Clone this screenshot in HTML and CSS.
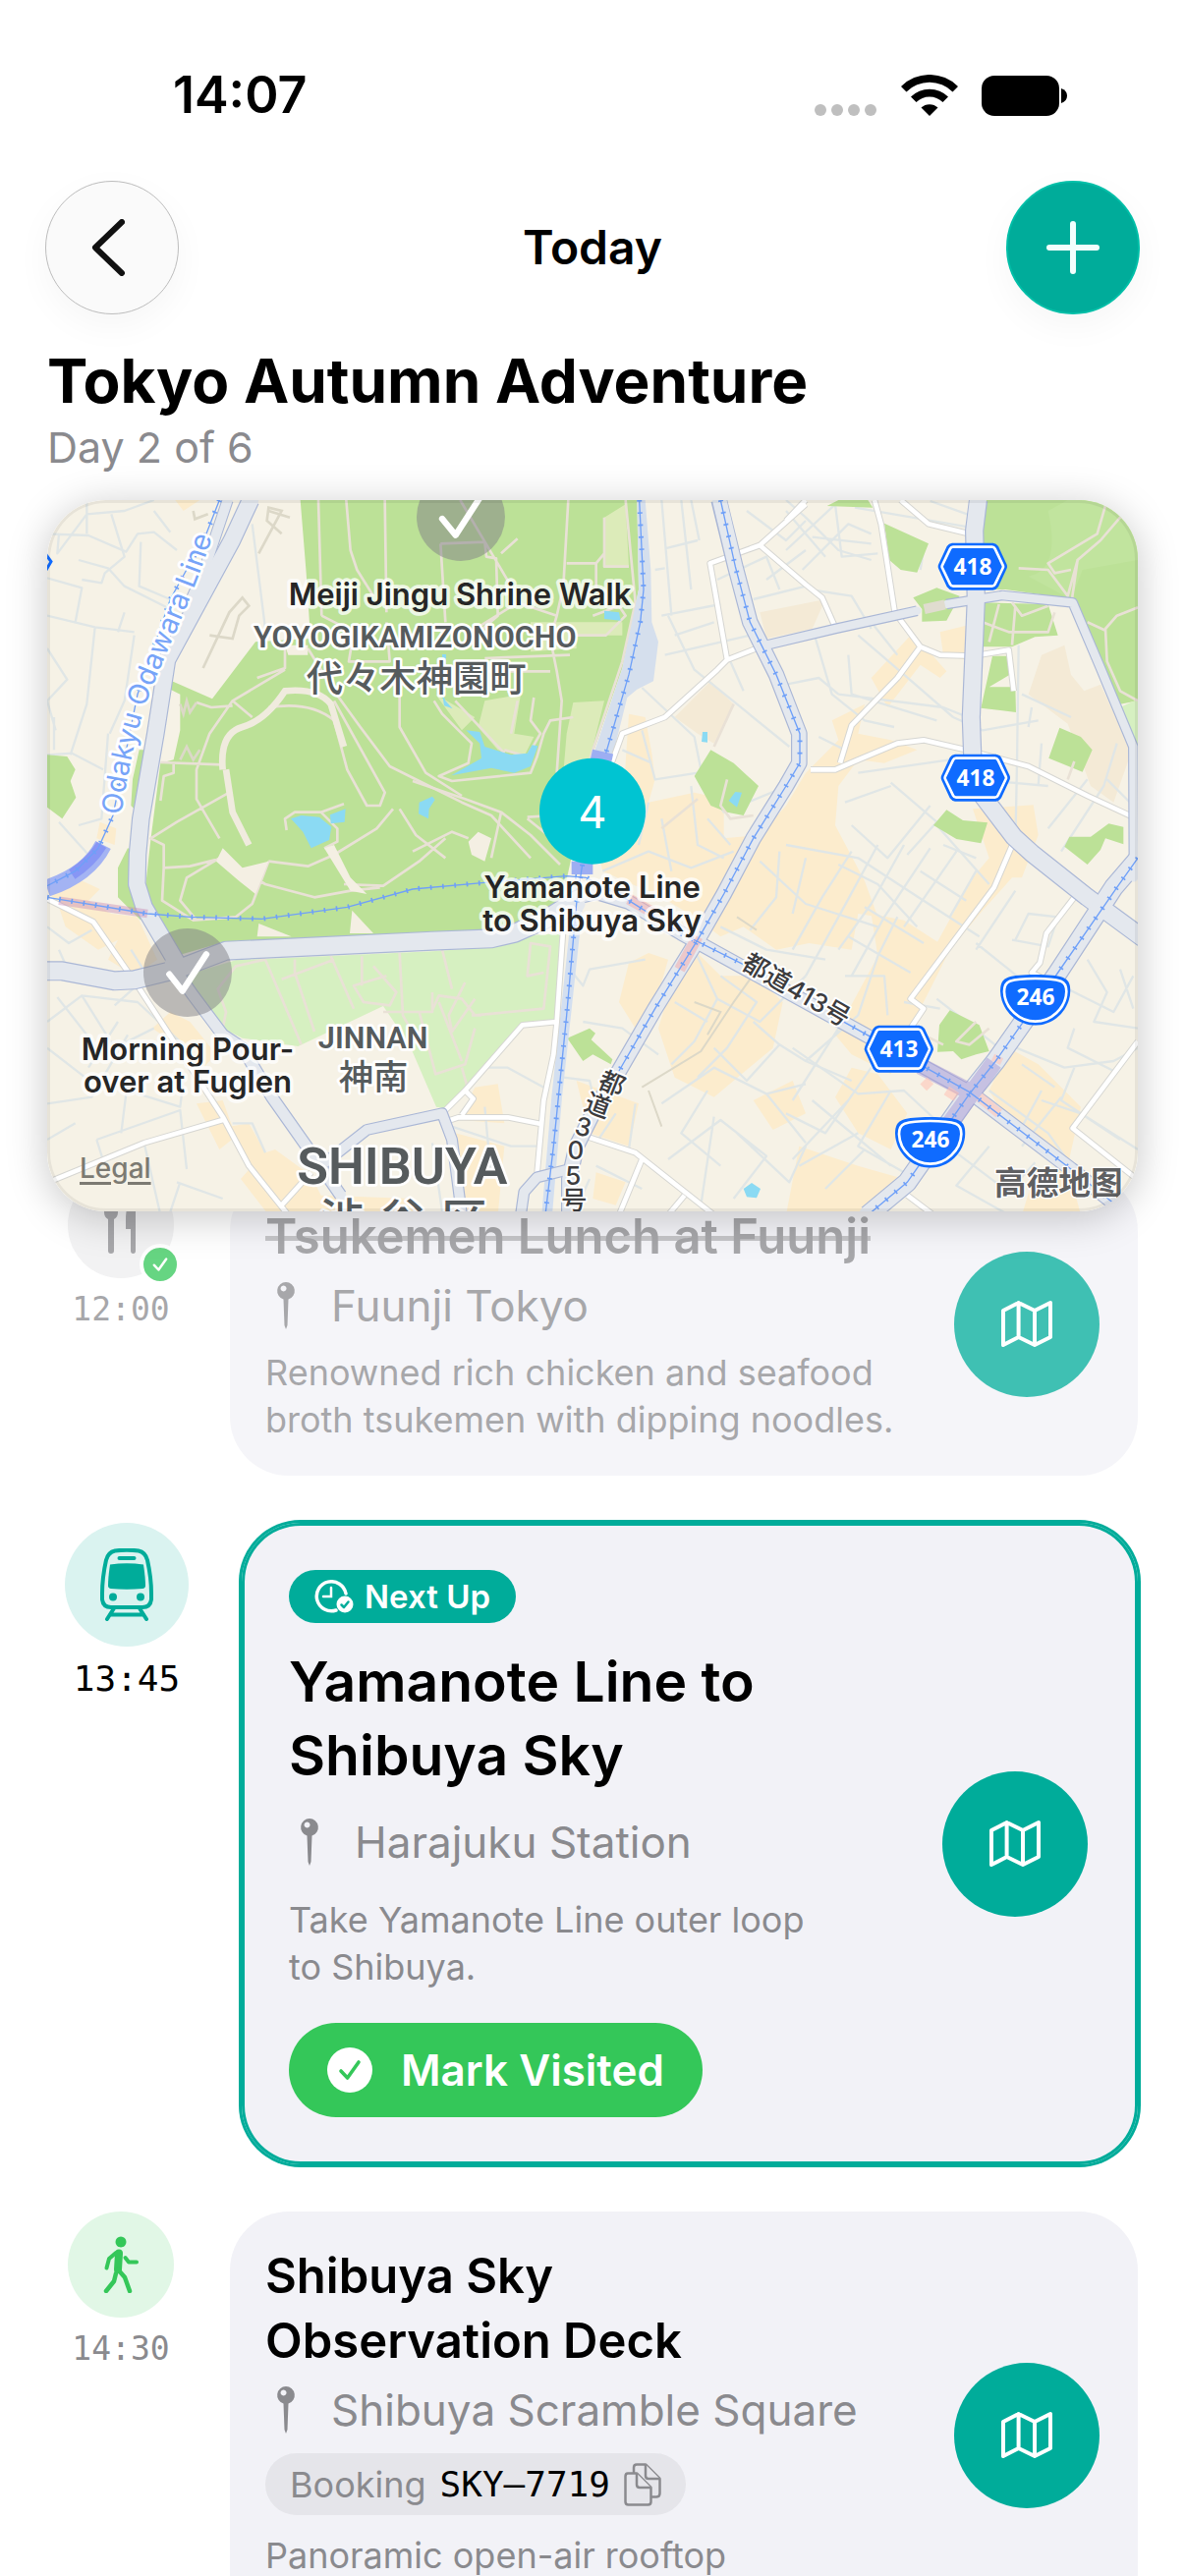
FILE: index.html
```
<!DOCTYPE html>
<html lang="en">
<head>
<meta charset="utf-8">
<meta name="viewport" content="width=device-width, initial-scale=1">
<title>Today</title>
<link rel="stylesheet" href="styles.css">
</head>
<body>
<svg class="sprite" aria-hidden="true">
  <symbol id="i-map" viewBox="0 0 52 49"><path d="M2 11 17.600 3 34 11 50 3V38L34 46 17.600 38 2 46ZM17.600 3V38M34 11V46" fill="none" stroke="currentColor" stroke-width="4" stroke-linejoin="round" stroke-linecap="round"/></symbol>
  <symbol id="i-pin" viewBox="0 0 18 48"><path fill="currentColor" fill-rule="evenodd" d="M9 0a9 9 0 0 1 2.500 17.600L10.500 44 9 48 7.500 44 6.500 17.600A9 9 0 0 1 9 0ZM6.500 3.500a3 3 0 1 0 .1 0Z"/></symbol>
  <symbol id="i-check" viewBox="0 0 16 16"><path d="M3.500 8.500 6.800 12 12.500 4" fill="none" stroke="currentColor" stroke-width="1.800" stroke-linecap="round" stroke-linejoin="round"/></symbol>
  <symbol id="hex" viewBox="0 0 215 148"><path d="M45 2H170Q180 3 186 12L211 66Q215 74 211 82L186 136Q180 145 170 146H45Q35 145 29 136L4 82Q0 74 4 66L29 12Q35 3 45 2Z" fill="#0f6bff"/><path d="M48 14H167Q173 14 176 20L200 70Q202 74 200 78L176 128Q173 134 167 134H48Q42 134 39 128L15 78Q13 74 15 70L39 20Q42 14 48 14Z" fill="none" stroke="#fff" stroke-width="8"/></symbol>
  <symbol id="round" viewBox="0 0 215 155"><path d="M107 0C150 0 172 3 190 8 208 14 214 28 214 50 212 110 162 155 107 155S2 110 0 50C0 28 6 14 24 8 42 3 64 0 107 0Z" fill="#0f6bff"/><path d="M107 12C150 12 170 15 185 20 198 25 202 34 202 52 200 104 154 143 107 143S14 104 12 52C12 34 16 25 29 20 44 15 64 12 107 12Z" fill="none" stroke="#fff" stroke-width="8"/></symbol>
</svg>

<div class="app">
  <div class="status">
    <span class="status-time">14:07</span>
    <span class="status-icons">
      <svg class="dots" viewBox="0 0 64 12"><g fill="#bfbfbf"><circle cx="6" cy="6" r="6"/><circle cx="23" cy="6" r="6"/><circle cx="40" cy="6" r="6"/><circle cx="57" cy="6" r="6"/></g></svg>
      <svg class="wifi" viewBox="0 0 58 42"><path d="M29 42 20.500 33.500A12.500 12.500 0 0 1 37.500 33.500Z"/><path d="M10 22.500 15.500 28A19.500 19.500 0 0 1 42.500 28L48 22.500A27 27 0 0 0 10 22.500Z"/><path d="M0 12 5.500 17.500A33.500 33.500 0 0 1 52.500 17.500L58 12A41 41 0 0 0 0 12Z"/></svg>
      <svg class="battery" viewBox="0 0 87 41"><rect width="79" height="41" rx="13"/><path d="M81 13Q87 15 87 20.500T81 28Z"/></svg>
    </span>
  </div>

  <nav class="nav">
    <button class="nav-btn back" aria-label="Back"><svg viewBox="0 0 34 58"><path d="M31 3 4 29 31 55" fill="none" stroke="#111" stroke-width="6" stroke-linecap="round" stroke-linejoin="round"/></svg></button>
    <span class="nav-title">Today</span>
    <button class="nav-btn add" aria-label="Add"><svg viewBox="0 0 54 54"><path d="M27 3V51M3 27H51" stroke="#f2fffd" stroke-width="6" stroke-linecap="round"/></svg></button>
  </nav>

  <header class="heading">
    <h1>Tokyo Autumn Adventure</h1>
    <p>Day 2 of 6</p>
  </header>

  <section class="map">
    <svg class="map-canvas" viewBox="24 27 3330 2172" preserveAspectRatio="xMidYMid slice">
      <rect x="0" y="0" width="3400" height="2260" fill="#f6f2e6"/>
      <!-- built-up blocks -->
      <g fill="#fceccd">
        <path d="M415 27H490L440 60ZM185 1010 235 1030 230 1080 175 1060Z"/>
        <path d="M24 1215 110 1180 185 1215 150 1250 220 1290 300 1300 360 1430 290 1480 210 1430 240 1370 180 1400 80 1330 60 1270Z"/>
        <path d="M345 1640 400 1590 460 1620 540 1720 500 1760 420 1690ZM480 1870 560 1860 600 1970 550 2010ZM580 1940 640 1930 690 2020 720 2010 830 2090 860 2150 1140 2160V2210H700L615 2100 650 2060Z"/>
        <path d="M1800 680 1850 690 1870 800 1880 880 1860 950 2000 920 2090 940 2090 1060 2200 1050 2280 960 2340 860 2440 760 2420 700 2520 650 2500 740 2600 760 2680 790 2580 830 2500 820 2440 900 2430 1020 2520 1190 2560 1300 2500 1290 2480 1400 2350 1380 2250 1400 2150 1330 2080 1360 2000 1300 1900 1240 1720 1160 1700 1080 1780 980Z"/>
        <path d="M2540 570 2660 440 2700 470 2770 550 2750 570 2690 530 2590 660ZM2750 430 2830 410V515L2760 500ZM2850 970 3035 958 3050 1050 3000 1180 2970 1180 2880 1280 2780 1400 2740 1380 2850 1180 2900 1120Z"/>
        <path d="M1800 1440 1860 1410 1920 1430 1900 1500 1820 1640 1770 1560ZM1920 1540 2000 1400 2080 1480 2190 1480 2270 1560 2240 1700 2060 1850 1940 1790 1890 1640Z"/>
        <path d="M2540 1290 2640 1310 2780 1400 2680 1600 2600 1780 2480 1720 2430 1660 2560 1420ZM2480 1760 2560 1780 2650 1900 2600 2010 2500 1960 2430 1850ZM2960 1700 3050 1750 3180 1880 3140 2060 2940 1900 2900 1830ZM2320 2000 2500 2060 2640 2100 2560 2210H2280ZM3040 2080 3140 2060 3180 2210H3000Z"/>
        <path d="M1330 1820 1400 1810 1420 1930 1280 1920ZM1640 1800 1830 1870 1800 2000 1680 1960ZM1700 2080 1790 2110 1760 2180 1690 2160ZM2180 1860 2300 1800 2340 1900 2240 1950ZM1270 1960 1420 2000 1400 2210H1300Z"/>
      </g>
      <g fill="#f4ead6">
        <path d="M2200 370 2400 330 2360 420 2220 450ZM1940 690 2050 580 2120 650 2060 770 2010 740ZM3020 620 3060 500 3130 470 3150 560 3190 610 3240 590 3310 740 3340 780 3280 950 3210 900 3140 710Z"/>
      </g>
      <!-- minor streets -->
      <g fill="none" stroke="#e0e6e6" stroke-width="7" stroke-linejoin="round" class="streets">
        <path d="M145 27V130M24 130 150 135 265 185 300 130 350 125 420 180M24 60 90 27M60 130 55 190 145 70 260 60 350 27M120 210 210 235 260 290 400 360M24 265 130 295 110 400M24 380 170 415 290 430M170 415 145 650 95 805M24 480 85 575 24 640M260 370 240 430M220 70 260 200 200 250 190 280 130 270M310 155 305 290 400 330M350 60 400 125M24 805 100 800 195 850M210 740 190 1000 120 1020M290 440 260 640 215 740M45 690V790M650 100 690 420M60 1010 150 1110M24 640 50 730"/>
        <path d="M24 1620 130 1540 230 1700 350 1640M55 1545 200 1730M24 1870 160 1850 270 1660M130 1540 300 1560 450 1700M150 1760 240 1620M24 1700 140 1790 430 1880 440 1800M175 1980 430 1890 450 2070M175 1980 200 2060M24 1980 110 1930M320 1990 370 2210M420 2110 560 2160M230 1570 330 1480 280 1400M100 1490 60 1400M430 2110 400 2200M590 1930 650 1930 690 2020M270 1800 250 1960M700 1860 760 1930M24 1330 90 1380 160 1340"/>
        <path d="M1900 27 1930 380M1960 27 1990 300M2010 150 1910 175M1990 27 2015 150M1880 240 1910 235M1900 380 2080 345M2180 330 2340 290M1940 440 2060 400M1910 500 2170 440M1920 380 2000 545 2130 650 2290 780M2110 520 2150 610M1840 600 2000 750 2020 850M1840 730 1880 880 2010 860M1780 790 1870 830M2020 880 2090 980 2260 910M2070 270 2220 200 2260 300M2160 60 2280 150 2340 90M2340 180 2220 270M2280 27 2340 80 2440 180 2540 210"/>
        <path d="M2280 180 2430 40 2450 200 2560 190M2280 60 2400 200M2330 240 2470 100 2540 130M2360 140 2540 160M2350 300 2480 320 2540 420M2280 590 2380 570 2440 620M2370 450 2420 620 2520 700 2610 720M2470 500 2480 620 2740 700M2500 440 2640 560M2440 620 2760 660 2860 700M2640 560 2790 690M2540 400 2620 500M2380 750 2460 790M2790 690 2880 730 3050 700M2990 470 2985 830 2980 1080M3000 620 3150 690M3030 660 3020 720M3060 770 3050 900M2500 860 2780 820 2860 880M2600 890 2740 1010 2650 1110M2460 950 2600 900M2480 1020 2590 1120 2720 960M2860 880 3080 900M3290 770 3250 900 3120 1100M3200 880 3080 1030M2740 1020 2900 1200M3260 880 3340 960M2720 30 2860 80M2700 180 2690 240M2490 50 2840 110"/>
        <path d="M1720 1160 1860 1100 1990 1150 2120 1100M1860 950 1830 1080M1900 1000 1930 1160M1990 900 2010 1080 2090 1120M2040 1000 2110 1080M2200 1130 2340 1260 2560 1330M2260 1100 2250 1240 2170 1340M2340 1120 2300 1290M2080 1330 2220 1400 2400 1430M2480 1100 2390 1240 2300 1400M2440 1140 2560 1200 2680 1330M2280 1080 2500 1120 2700 1250 2870 1360M2560 1080 2440 1300 2340 1480M2640 1080 2540 1260 2440 1400M2720 1090 2580 1300 2480 1480M2520 1270 2700 1380M2470 1360 2660 1470M2800 1100 2640 1330M2760 1080 2860 1120M2690 1160 2830 1250"/>
        <path d="M1620 1460 1660 1510 1680 1460 1850 1430M1660 1620 1780 1640 1890 1720M1600 1790 1680 1800 1700 1880M2000 1400 2070 1550 2000 1680 1930 1750M2070 1550 2200 1620 2340 1480M2080 1480 2190 1560 2100 1700 2010 1790M1940 1560 2040 1620M2180 1620 2260 1690 2160 1800 2060 1700M2260 1690 2340 1740 2480 1800M1900 1870 2060 1760 2220 1840 2340 1810M2040 1830 1960 1960 2080 2060M1820 1870 1800 2010M1760 1900 1700 1990M1920 2040 2080 1920 2220 2030 2120 2160M2130 1960 2290 2110 2340 2000M2220 1840 2340 1990M2060 1910 2020 2180M1700 2060 1840 2130M1680 2100 1640 2190M1230 1930 1440 2000 1520 2000M1340 1760 1430 1760 1540 1820M1200 1990 1230 2200M1360 1880 1380 2100"/>
        <path d="M2340 1740 2500 1600 2560 1420 2620 1300M2460 1480 2580 1480 2590 1600M2740 1550 2830 1620 2930 1700M2860 1380 2960 1460 3080 1560M2640 1560 2750 1580M2970 1370 3080 1390 3110 1300 3020 1290 2980 1370M2300 1700 2500 1840 2640 1830 2780 1960M2440 1640 2300 1860M2540 1760 2400 1960 2280 1900M2600 1830 2500 2000 2640 2080M2300 2040 2470 1860M2320 2060 2500 1960M2400 2130 2520 2010M2360 1860 2600 2060M2900 1830 3080 1960 3180 2100M2960 1690 3130 1760 3280 1740 3354 1700M3000 1750 3100 1820M3060 1830 2990 1960M3160 1760 3120 1860 3300 1980M3000 2000 3120 1850M3060 1860 3180 1900 3354 2010M3100 1500 3280 1590 3340 1480M3200 1430 3260 1530 3220 1620 3354 1640M3160 1640 3140 1700 3280 1770M3300 1460 3340 1580M2900 2000 2800 2120 2960 2210M2800 2020 2960 2140 3040 2050M2860 1160 2780 1300M2980 1220 2860 1400"/>
      </g>
      <!-- parks -->
      <g fill="#bce197">
        <path d="M797 27 815 250 828 450 660 460 528 634 405 580 400 605 430 620V730L410 820 370 830 340 1065 325 1200 330 1270 415 1420 570 1375 1340 1345 1540 1310 1600 1230 1620 1140 1690 800 1780 540 1830 300 1825 27Z"/>
        <path d="M24 805 85 810 110 850 95 885 112 935 70 1000 24 965ZM305 790 285 880 280 960 300 980 330 790ZM270 1090 240 1150V1240L310 1310 300 1100Z"/>
        <path d="M2000 870 2050 790 2120 830 2196 900 2150 990 2100 980 2050 960ZM2580 98 2715 160 2680 248 2630 240 2595 210ZM2668 325 2740 295 2810 320 2770 395 2695 398 2695 360ZM2405 45 2440 27H2530L2545 50Z"/>
        <path d="M2890 27H3354V640L3300 650 3160 330 2950 300H2880L2875 150ZM2880 340 3080 345 3110 440 3040 445 2970 475H2880ZM2910 503H2965L2963 560 2900 598H2980L2982 675 2875 662Z"/>
        <path d="M3115 722 3180 750 3215 790 3185 857 3082 815ZM2770 973 2820 1005 2895 1012 2875 1075 2800 1062 2730 1020ZM3145 1055 3210 1055 3265 1015 3310 1025V1078L3255 1060 3240 1095 3200 1140 3130 1085Z"/>
        <path d="M1612 1670 1680 1640 1698 1655 1685 1675 1750 1735 1745 1750 1690 1720 1660 1740ZM2748 1630 2780 1585 2870 1630 2900 1710 2860 1720 2815 1735 2790 1710 2742 1712Z"/>
      </g>
      <path d="M3080 60Q3120 240 3020 260L3150 330 3185 240 3354 210V130L3260 27H3140Z" fill="#c1e49e"/>
      <g fill="#d6f0c1">
        <path d="M440 1480 600 1432 1200 1405 1390 1392 1510 1355 1600 1350 1580 1620 1470 1635 1240 1885 1212 1880 1130 1690 1050 1572 790 1695 620 1670 550 1635Z"/>
        <path d="M3300 660 3354 635V800Z"/>
      </g>
      <path d="M1725 80 1790 40 1800 230H1725ZM1630 645 1725 640 1680 820 1600 860 1610 740ZM1360 640 1470 620 1450 740 1510 750 1480 810 1400 790 1340 720ZM1210 620 1330 690 1290 730ZM1640 480 1500 490 1500 400H1780L1780 440H1640Z" fill="#dcebb9"/>
      <!-- park trails -->
      <g fill="none" stroke="#e9e1d6" stroke-width="8" stroke-linejoin="round">
        <path d="M852 27 862 380M937 27 950 180 970 240 1020 320M1055 27 1060 370M862 380 960 430 945 520 1070 520 1060 400M1100 620 1100 720 1180 860 1290 930M750 460 750 540 665 570M750 545 590 640 520 740 480 850 480 940 550 1060M820 480 900 610 980 720 1070 840 1290 950 1380 990 1500 1120M590 640 650 690M480 645 525 660 590 655M370 828 560 835M410 830V860L380 870 370 945M580 920 420 1010 340 1060 380 1080V1150L460 1145 560 1120M755 1035 750 1000 780 980H860L930 955M860 980 910 1030V1070L870 1090M1080 970 1030 1030 900 1110 820 1145 700 1130M1100 970 1150 1050 1240 1120M930 1200 1050 1205 1160 1130 1240 1060M560 1120 690 1200 840 1240 950 1220 1040 1210M380 1150 375 1250 470 1310 600 1300 650 1260 700 1130M550 1120 450 1180 430 1250 480 1310M700 660Q830 640 900 700L940 850 1000 960 1040 960 1055 920 900 640"/>
        <path d="M1225 160 1360 155 1365 200 1395 205 1400 380 1330 440M1225 160 1240 400M1285 27 1470 340M1460 145 1410 190M1615 27 1600 290 1580 380M1725 80 1725 230H1800M1790 27 1820 340 1780 520 1680 820M1610 220 1700 220 1725 190M1700 220V300M1580 380 1560 450 1580 550 1595 640 1580 860M1300 550 1560 550M1360 510 1620 500M1640 440 1730 440 1790 380 1770 350 1690 380M1300 440 1460 340 1580 380M1205 640 1230 680 1280 730 1320 770 1310 830 1220 870 1260 885 1500 860 1520 810 1540 740 1560 700 1630 690M1270 640 1420 800M1510 630 1500 700 1530 740 1490 810 1420 790M1460 640 1440 740M1140 885 1300 940 1410 980 1500 1050 1590 1140M1410 980 1380 1120M1490 1000 1590 1080M1140 1100 1260 1040 1310 1060M1490 995 1570 990"/>
        <path d="M690 1430 800 1690M890 1420 960 1580M985 1420V1510M900 1430 740 1490M780 1430V1470L840 1650M1100 1410 1110 1600 1160 1690M1020 1450 1090 1530 1070 1570 990 1560 960 1510 1060 1480M1050 1590H1200V1530M560 1640 570 1590 545 1520 600 1450 690 1430M1260 1520 1230 1400M1200 1585 1220 1540 1290 1550 1330 1600 1540 1580 1560 1390 1500 1380 1490 1480 1540 1470M1300 1500 1250 1600 1260 1650 1330 1550M1320 1600 1350 1600M1160 1590 1210 1780 1300 1750 1330 1640M1290 1760 1310 1830M1290 1740 1220 1560"/>
        <path d="M2990 235 3080 240 3140 320 3170 210 3240 150 3300 80 3354 60M3260 27 3230 130 3080 220 3100 250 3150 240M3150 350 3170 210M3354 355 3290 380 3255 420 3260 520 3300 610 3354 640M3200 400 3255 425M2880 400 2960 430 3080 430 3100 370M2930 345 2900 460M2970 340 3000 380 3080 350M3160 825 3140 880M2980 350 2970 470M2860 1620 2800 1680 2840 1690 2900 1640M2760 1690 2700 1660M2100 880 2080 960 2110 1000 2180 990M1900 1030 2010 940M2120 650 2060 780"/>
      </g>
      <path d="M560 850Q550 740 620 720T750 610Q850 600 890 650L930 780 M570 850 590 980 640 1080" fill="none" stroke="#f0ebde" stroke-width="20"/>
      <path d="M540 1130 560 1090 620 1150 700 1130 660 1230 610 1190ZM870 1090 900 1080 950 1180 1000 1230 950 1220ZM670 1320 770 1360H665ZM955 1280 1020 1350H948ZM1310 1070 1340 1040 1380 1060 1360 1130 1320 1110ZM750 470H820V500H760Z" fill="#f4efe3"/>
      <g fill="none" stroke="#dcd8c8" stroke-width="8"><path d="M500 540 580 370 620 325 640 350 610 380 590 450 520 440M670 190 740 60 700 50 695 90 740 130M765 80 700 60M470 60 475 85 515 70M430 650 440 680 450 640 460 675 480 645M430 820 450 780 470 820 490 790"/><path d="M1840 1820 2020 1710 2120 1560 2170 1490M1860 1830 1900 1940M2000 1560 2080 1590 2040 1660M2130 1300 2190 1340" stroke-width="6"/></g>
      <!-- ponds and streams -->
      <g fill="#8bdaf3">
        <path d="M768 1000 800 990 855 995 892 1025 885 1065 830 1090 805 1040ZM888 988 935 970 932 1010 890 1015ZM1160 950 1200 932 1208 942 1190 970 1188 1000 1158 985Z"/>
        <path d="M1303 730 1345 735 1360 780 1440 805 1490 800 1505 775 1522 778 1500 840 1450 860 1380 845 1258 868 1350 815 1345 770ZM1725 365 1770 370 1775 395 1725 390ZM2025 735H2040V767L2022 765ZM2105 945 2125 918 2145 920 2130 965ZM2150 2130 2175 2112 2202 2130 2190 2158 2160 2155Z"/>
        <path d="M1230 498H1242V550L1232 540ZM1228 605 1240 640 1262 664 1236 655Z"/>
      </g>
      <!-- rail corridor -->
      <path d="M1825 27H1850L1867 240 1870 400 1890 460 1875 580 1825 605 1795 630 1745 830 1690 810 1780 540 1830 300Z" fill="#d5dfed"/>
      <path d="M1650 1200 1620 1480 1580 1850 1550 2210" fill="none" stroke="#d3dff0" stroke-width="32"/>
      <!-- local roads -->
      <g class="local">
        <path id="loc" d="M2340 40 2200 165 2048 220 2100 515M2200 165 2340 285 2390 325 2430 415M2190 480 2100 515 2070 545 1910 690 1780 740 1740 850M2340 27 2280 90M2550 27 2570 100 2612 370 2690 475 2750 500 2850 503 2960 485 2975 610M2630 27 2715 100 2860 135M2690 475 2620 570 2480 715 2445 830M2355 850 2430 850 2500 820 2620 770 2700 760 2830 790 3020 840 3200 930 3340 995M2975 1070 2915 1210 2660 1550 2700 1580 2660 1640M3160 1240 3075 1350 3055 1440 3030 1470 3090 1500M3354 1680 3155 1945 3350 2100M2650 2150 2730 2210M1600 1330 1580 1620 1570 1720 1540 1860 1520 2080M1580 1620 1475 1630 1300 1830 1240 1890M1240 1925 1280 1912H1430L1535 1933M1300 1830 1325 1855 1290 1905M1670 1970 1820 2020 2060 2210M1840 2040 1770 2210M1970 2150 1920 2210M24 1245 165 1315 300 1510 560 1910 640 2060 760 2210M40 2105 320 1990 560 1920M740 2180 830 2080"/>
        <use href="#loc" class="top"/>
      </g>
      <!-- main roads -->
      <g fill="none" stroke="#aab7d6" stroke-linejoin="round">
        <path d="M575 27 500 250 450 360" stroke-width="36"/>
        <path d="M645 27 588 150 390 515 355 740 310 1000 300 1110 298 1200 320 1270 420 1440" stroke-width="56"/>
        <path d="M400 1440 470 1540 560 1660 620 1700 710 1850 830 2020 920 2150" stroke-width="40"/>
        <path d="M24 1465 70 1465 230 1495 290 1492 420 1460 570 1403 1200 1373 1380 1366 1450 1350 1540 1310 1640 1260" stroke-width="60"/>
        <path d="M1560 1290 1640 1240 1700 1225 1800 1255 1960 1350 2840 1835 3150 2070 3300 2190" stroke-width="46"/>
        <path d="M2220 470 2430 420 2680 365M2770 345 2940 318 3155 340 3240 540 3340 780 3342 1180" stroke-width="32"/>
        <path d="M2867 27 2855 120 2860 330 2845 690 2850 830 2880 930 2975 1055 3030 1105 3200 1240 3370 1365" stroke-width="58"/>
        <path d="M2075 27 2125 230 2170 400 2250 560 2320 740 2320 830 2280 900 2180 1060 2090 1230 2010 1370 1880 1580 1770 1770 1700 1880 1640 2000 1618 2100V2210" stroke-width="50"/>
        <path d="M3370 1105 3280 1210 3110 1470 2920 1740 2840 1840 2720 2010 2650 2110 2530 2210" stroke-width="62"/>
        <path d="M860 2060 1000 1950 1230 1900 1260 1980 1290 2210M1620 2070 1520 2095 1480 2140 1470 2210" stroke-width="36"/>
      </g>
      <g fill="none" stroke="#e4e8ee" stroke-linejoin="round" stroke-linecap="round">
        <path d="M575 27 500 250 450 360" stroke-width="30"/>
        <path d="M645 27 588 150 390 515 355 740 310 1000 300 1110 298 1200 320 1270 420 1440" stroke-width="49"/>
        <path d="M400 1440 470 1540 560 1660 620 1700 710 1850 830 2020 920 2150" stroke-width="33"/>
        <path d="M10 1465 70 1465 230 1495 290 1492 420 1460 570 1403 1200 1373 1380 1366 1450 1350 1540 1310 1640 1260" stroke-width="53"/>
        <path d="M1560 1290 1640 1240 1700 1225 1800 1255 1960 1350 2840 1835 3150 2070 3300 2190" stroke-width="39"/>
        <path d="M2220 470 2430 420 2680 365M2770 345 2940 318 3155 340 3240 540 3340 780 3342 1180" stroke-width="25"/>
        <path d="M2867 20 2855 120 2860 330 2845 690 2850 830 2880 930 2975 1055 3030 1105 3200 1240 3370 1365" stroke-width="51"/>
        <path d="M2075 20 2125 230 2170 400 2250 560 2320 740 2320 830 2280 900 2180 1060 2090 1230 2010 1370 1880 1580 1770 1770 1700 1880 1640 2000 1618 2100V2210" stroke-width="43"/>
        <path d="M3370 1105 3280 1210 3110 1470 2920 1740 2840 1840 2720 2010 2650 2110 2530 2210" stroke-width="55"/>
        <path d="M860 2060 1000 1950 1230 1900 1260 1980 1290 2210M1620 2070 1520 2095 1480 2140 1470 2210" stroke-width="29"/>
      </g>
      <path d="M2702 360 2765 346" stroke="#e0dccf" stroke-width="30"/>
      <!-- stations -->
      <g fill="none">
        <path d="M195 1080Q150 1170 24 1212" stroke="#a3b3f3" stroke-width="52"/>
        <path d="M190 1080Q160 1130 100 1170" stroke="#8796f5" stroke-width="34"/>
        <path d="M60 1250 330 1290" stroke="#c98fb5" stroke-opacity=".45" stroke-width="26"/>
        <path d="M1685 808 1748 822M1625 1150 1690 1150" stroke="#9daef2" stroke-width="40"/>
        <path d="M1800 1245 1880 1290M2010 1360 1955 1460" stroke="#f4a8a8" stroke-opacity=".5" stroke-width="34"/>
        <path d="M2690 1755 2850 1838M2915 1745 2780 1930" stroke="#a79ad6" stroke-opacity=".5" stroke-width="52"/>
        <path d="M2930 1725 2920 1745M2700 1800 2720 1820M2770 1830 2800 1850M2870 1850 2930 1900" stroke="#ffc5b8" stroke-opacity=".6" stroke-width="30"/>
      </g>
      <!-- railways -->
      <g fill="none" stroke="#6fa0f8" class="rail">
        <path id="rail" d="M550 27 510 130 400 330 300 620 225 990 180 1090 110 1160 24 1205M1832 27 1845 300 1835 400 1800 560 1730 800M1658 1140 1640 1260 1610 1600 1570 2000 1545 2210M24 1240 330 1290 460 1300 680 1306 940 1270 1140 1215 1360 1195 1610 1175 1670 1180 1800 1250 1960 1350 2160 1450M2420 1600 2840 1835 3150 2070 3300 2190M2080 27 2125 230 2170 400 2250 560 2322 740 2322 830 2280 900 2180 1060 2090 1230 2010 1370 1880 1580 1770 1770M3354 1120 3290 1210 3110 1470 2920 1740 2840 1840 2720 2010 2650 2110 2530 2210"/>
        <use href="#rail" class="ticks"/>
      </g>
      <path d="M18 190 36 215 18 245" fill="none" stroke="#0f6bff" stroke-width="9"/>
      <!-- place names -->
      <path id="odakyu" d="M250 990C279 800 309 690 344 600S494 270 542 90" fill="none"/>
      <text class="line-name"><textPath href="#odakyu">Odakyu Odawara Line</textPath></text>
      <g class="district">
        <text x="1147" y="477" font-size="92">YOYOGIKAMIZONOCHO</text>
        <text x="1151" y="612" font-size="112" class="kanji">代々木神園町</text>
        <text x="1019" y="1700" font-size="92">JINNAN</text>
        <text x="1020" y="1828" font-size="106" class="kanji">神南</text>
        <text x="1108" y="2115" font-size="156">SHIBUYA</text>
        <text x="925 1110 1298" y="2276" font-size="140" class="kanji">渋谷区</text>
      </g>
      <g class="route">
        <text transform="translate(2298 1546) rotate(30)">都道413号</text>
        <text transform="translate(1738 1834) rotate(22)">都</text>
        <text transform="translate(1696 1902) rotate(20)">道</text>
        <text transform="translate(1654 1968) rotate(14)">3</text>
        <text x="1638" y="2040">0</text>
        <text x="1630" y="2117">5</text>
        <text x="1633" y="2194">号</text>
      </g>
      <g class="shield">
        <use href="#hex" x="2742" y="156" width="215" height="148"/><text x="2850" y="256">418</text>
        <use href="#hex" x="2751" y="801" width="215" height="148"/><text x="2859" y="901">418</text>
        <use href="#hex" x="2517" y="1629" width="215" height="148"/><text x="2625" y="1728">413</text>
        <use href="#round" x="2934" y="1476" width="215" height="155"/><text x="3042" y="1569">246</text>
        <use href="#round" x="2613" y="1911" width="215" height="155"/><text x="2721" y="2004">246</text>
      </g>
      <text class="brand" x="3112" y="2149">高德地图</text>
      <!-- stops -->
      <g fill="#7f7f85" fill-opacity=".5"><circle cx="1287" cy="78" r="135"/><circle cx="453" cy="1470" r="135"/></g>
      <path d="M1230 84 1271 134 1345 20M397 1475 437 1526 510 1414" fill="none" stroke="#fff" stroke-width="19" stroke-linecap="round" stroke-linejoin="round"/>
      <circle cx="1689" cy="977" r="162" fill="#00c4d2"/>
      <text class="stop-number" x="1689" y="1028">4</text>
      <g class="stop-name">
        <text x="1284" y="347">Meiji Jingu Shrine Walk</text>
        <text x="1688" y="1243">Yamanote Line</text><text x="1688" y="1343">to Shibuya Sky</text>
        <text x="453" y="1737">Morning Pour-</text><text x="453" y="1837">over at Fuglen</text>
      </g>
    </svg>
    <a class="legal" href="#legal">Legal</a>
  </section>

  <main class="list">
    <article class="row visited">
      <div class="rail-col">
        <span class="disc grey">
          <svg width="36" height="60" viewBox="0 0 36 60"><path d="M1 1V17Q1 22 5 24V56Q5 59 8 59T11 56V24Q15 22 15 17V1H12V16H9.500V1H6.500V16H4V1ZM33 1Q23 6 23 24V34H28V56Q28 59 30.500 59T33 56Z" fill="#8a8a8e"/></svg>
          <span class="done"><svg viewBox="0 0 16 16"><use href="#i-check"/></svg></span>
        </span>
        <time>12:00</time>
      </div>
      <div class="card">
        <div class="body">
          <h2><s>Tsukemen Lunch at Fuunji</s></h2>
          <p class="place"><svg><use href="#i-pin"/></svg>Fuunji Tokyo</p>
          <p class="note">Renowned rich chicken and seafood<br>broth tsukemen with dipping noodles.</p>
        </div>
        <button class="go" aria-label="Map"><svg><use href="#i-map"/></svg></button>
      </div>
    </article>

    <article class="row next">
      <div class="rail-col">
        <span class="disc teal">
          <svg width="54" height="74" viewBox="0 0 54 74"><g fill="none" stroke="#00ac9a" stroke-width="4" stroke-linecap="round"><path d="M15 2.500Q27 .8 39 2.500 46 4 48 12 52 30 52 46V52Q51 60 43 60H11Q3 60 2 52V46Q2 30 6 12 8 4 15 2.500Z"/><path d="M19.500 10H34.500"/><path d="M14 61 7 72M40 61 47 72M10 67.500H44"/></g><path d="M10 16.500Q27 14 44 16.500 46 30 46 38 46 40.500 43 41 27 42.500 11 41 8 40.500 8 38 8 30 10 16.500Z" fill="#00ac9a"/><circle cx="13" cy="49.500" r="4" fill="#00ac9a"/><circle cx="41" cy="49.500" r="4" fill="#00ac9a"/></svg>
        </span>
        <time>13:45</time>
      </div>
      <div class="card">
        <div class="body">
          <span class="badge"><svg viewBox="0 0 40 34"><g fill="none" stroke="#fff" stroke-width="3.500" stroke-linecap="round"><path d="M32 14A15 15 0 1 0 22 31"/><path d="M17 8V17H9" stroke-width="2.500"/></g><circle cx="31" cy="25" r="8.500" fill="#fff"/><path d="M27.500 25.500 30 28 34.500 22.500" fill="none" stroke="#00ac9a" stroke-width="2.500" stroke-linecap="round" stroke-linejoin="round"/></svg>Next Up</span>
          <h2>Yamanote Line to Shibuya Sky</h2>
          <p class="place"><svg><use href="#i-pin"/></svg>Harajuku Station</p>
          <p class="note">Take Yamanote Line outer loop<br>to Shibuya.</p>
          <button class="mark"><span class="tick"><svg viewBox="0 0 16 16"><use href="#i-check"/></svg></span>Mark Visited</button>
        </div>
        <button class="go" aria-label="Map"><svg><use href="#i-map"/></svg></button>
      </div>
    </article>

    <article class="row">
      <div class="rail-col">
        <span class="disc green">
          <svg width="36" height="58" viewBox="0 0 36 58"><circle cx="18" cy="6" r="5.500" fill="#34c759"/><g fill="none" stroke="#34c759" stroke-linecap="round" stroke-linejoin="round"><path d="M16 17.500 15 34" stroke-width="8"/><path d="M13 17 6 23 3.500 32.500M22.500 22 26 26.500H34" stroke-width="4"/><path d="M15 34 22 42 27 56M13 38 11 46 3 56" stroke-width="4.500"/></g></svg>
        </span>
        <time>14:30</time>
      </div>
      <div class="card">
        <div class="body">
          <h2>Shibuya Sky<br>Observation Deck</h2>
          <p class="place"><svg><use href="#i-pin"/></svg>Shibuya Scramble Square</p>
          <button class="booking">Booking <b>SKY–7719</b><svg viewBox="0 0 38 44"><g fill="#e5e5ea" stroke="#8a8a8e" stroke-width="2.500" stroke-linejoin="round"><path d="M13 1.500H22L36.500 16V31Q36.500 34.500 33 34.500H10V4.500Q10 1.500 13 1.500Z"/><path d="M22 1.500V13Q22 16 25 16H36.500"/><path d="M4 10.500H13L27.500 25V39.500Q27.500 42.500 24.500 42.500H4.500Q1.500 42.500 1.500 39.500V13.500Q1.500 10.500 4 10.500Z"/><path d="M13 10.500V22Q13 25 16 25H27.500"/></g></svg></button>
          <p class="note">Panoramic open-air rooftop</p>
        </div>
        <button class="go" aria-label="Map"><svg><use href="#i-map"/></svg></button>
      </div>
    </article>
  </main>
</div>
</body>
</html>
```
FILE: styles.css
```
:root {
  --teal: #00ac9a;
  --green: #34c759;
  --grey: #8a8a8e;
  --card: #f2f2f7;
}

* { box-sizing: border-box; margin: 0; padding: 0; }

body {
  background: #fff;
  color: #000;
  font-family: Inter, "Liberation Sans", "Noto Sans CJK JP", sans-serif;
}

button { border: 0; font: inherit; color: inherit; cursor: pointer; }
svg { display: block; flex: none; }
.sprite { position: absolute; width: 0; height: 0; }

.app {
  height: 100vh;
  display: flex;
  flex-direction: column;
  overflow: hidden;
}

/* status bar */
.status {
  flex: none;
  display: flex;
  justify-content: space-between;
  align-items: center;
  padding: 67px 120px 57px 176px;
}
.status-time { font-size: 52px; line-height: 60px; font-weight: 600; }
.status-icons { display: flex; align-items: center; gap: 24px; }
.dots { width: 64px; height: 12px; align-self: flex-end; }
.wifi { width: 58px; height: 42px; }
.battery { width: 87px; height: 41px; }

/* navigation */
.nav {
  flex: none;
  display: flex;
  justify-content: space-between;
  align-items: center;
  padding: 0 46px;
}
.nav-title { font-size: 48px; line-height: 60px; font-weight: 600; }
.nav-btn {
  width: 136px;
  height: 136px;
  border-radius: 50%;
  display: grid;
  place-items: center;
  box-shadow: 0 12px 36px rgba(0, 0, 0, .04);
}
.back { background: #fafafa; border: 1px solid #bdbdbd; }
.back svg { width: 34px; height: 58px; margin-right: 8px; }
.add { background: var(--teal); border: 2px solid #00bfa8; }
.add svg { width: 54px; height: 54px; }

.heading { flex: none; padding: 32px 48px 27px; }
.heading h1 { font-size: 62px; line-height: 72px; font-weight: 700; }
.heading p { margin-top: 4px; font-size: 43px; line-height: 54px; color: var(--grey); }

/* map */
.map {
  flex: none;
  position: relative;
  z-index: 1;
  margin: 0 48px;
  aspect-ratio: 1110 / 724;
  border-radius: 60px;
  overflow: hidden;
  box-shadow: 0 6px 42px rgba(0, 0, 0, .22);
}
.map::after {
  content: "";
  position: absolute;
  inset: 0;
  border-radius: inherit;
  box-shadow: inset 0 0 0 3px rgba(0, 0, 0, .06);
  pointer-events: none;
}
.map-canvas { width: 100%; height: 100%; }
.map-canvas text { text-anchor: middle; paint-order: stroke; stroke: #fff; stroke-linejoin: round; }
.local { fill: none; stroke: #d6d6d2; stroke-width: 20; stroke-linejoin: round; }
.local .top { stroke: #fff; stroke-width: 14; }
.rail { stroke-width: 4; }
.rail .ticks { stroke-width: 15; stroke-dasharray: 5 32; }
.map-canvas .line-name { text-anchor: start; font-size: 86px; fill: #77a4f8; stroke-width: 16; }
.map-canvas .district text { font-family: Roboto, sans-serif; font-weight: 600; fill: #565b5d; stroke-width: 16; }
.map-canvas .district .kanji { font-family: "Noto Sans CJK JP", sans-serif; font-weight: 500; }
.map-canvas .route text { font-family: Inter, "Noto Sans CJK JP", sans-serif; font-size: 78px; font-weight: 500; fill: #3c3c3e; stroke-width: 12; }
.map-canvas .shield text { font-family: "Noto Sans", sans-serif; font-size: 68px; font-weight: 700; fill: #fff; stroke: none; }
.map-canvas .brand { font-family: "Noto Sans CJK SC", sans-serif; font-size: 98px; font-weight: 700; fill: #5f6062; stroke-width: 8; }
.map-canvas .stop-number { font-size: 136px; fill: #fff; stroke: none; }
.map-canvas .stop-name text { font-size: 93px; font-weight: 600; fill: #262626; stroke-width: 22; stroke-opacity: .75; }
.legal {
  position: absolute;
  left: 33px;
  bottom: 26px;
  font-size: 28px;
  line-height: 36px;
  font-weight: 500;
  color: #7c7a72;
  text-decoration-thickness: 3px;
  text-underline-offset: 4px;
}

/* timeline; its top slides under the map */
.list {
  flex: 1;
  min-height: 0;
  margin-top: -40px;
  padding: 0 48px;
  display: flex;
  flex-direction: column;
  gap: 48px;
  overflow-y: auto;
  scrollbar-width: none;
}
.row { flex: none; display: flex; gap: 36px; }
.visited { opacity: .75; }
.rail-col {
  flex: none;
  width: 150px;
  display: flex;
  flex-direction: column;
  align-items: center;
  gap: 12px;
}
.next .rail-col { width: 162px; }
.disc {
  position: relative;
  width: 108px;
  height: 108px;
  border-radius: 50%;
  display: grid;
  place-items: center;
}
.next .disc { width: 126px; height: 126px; }
.grey { background: #eeeeef; }
.teal { background: #daf3f0; }
.green { background: #e1f7e6; }
.done {
  position: absolute;
  right: -7px;
  bottom: -7px;
  width: 42px;
  height: 42px;
  padding: 6px;
  border: 4px solid #fff;
  border-radius: 50%;
  background: var(--green);
  color: #fff;
}
time { font-family: "DejaVu Sans Mono", monospace; font-size: 33px; line-height: 40px; color: var(--grey); }
.next time { font-size: 36px; line-height: 42px; color: #000; }

.card {
  flex: 1;
  display: flex;
  align-items: center;
  padding: 33px 39px 33px 36px;
  border-radius: 60px;
  background: var(--card);
}
.next .card { padding: 48px 51px 48px 48px; box-shadow: 0 0 0 3px var(--teal), inset 0 0 0 3px var(--teal); }
.body { flex: 1; display: flex; flex-direction: column; align-items: flex-start; }
.card h2 { font-size: 49px; line-height: 66px; font-weight: 600; }
.visited h2 { color: var(--grey); }
.visited s { text-decoration-thickness: 5px; text-decoration-color: rgba(138, 138, 142, .6); }
.place {
  margin-top: 10px;
  display: flex;
  align-items: center;
  gap: 25px;
  font-size: 44px;
  line-height: 54px;
  color: var(--grey);
}
.place svg { width: 42px; height: 48px; }
.note { margin-top: 17px; min-height: 96px; font-size: 36px; line-height: 48px; color: var(--grey); }
.next h2 { margin-top: 22px; font-size: 57px; line-height: 75px; }
.next .place { margin-top: 24px; }
.next .note { margin-top: 28px; }

.badge {
  display: flex;
  align-items: center;
  gap: 11px;
  height: 54px;
  padding: 0 26px;
  border-radius: 27px;
  background: var(--teal);
  color: #fff;
  font-size: 33px;
  font-weight: 600;
}
.badge svg { width: 40px; height: 34px; }

.mark {
  margin-top: 33px;
  display: flex;
  align-items: center;
  gap: 29px;
  height: 96px;
  padding: 0 39px;
  border-radius: 48px;
  background: var(--green);
  color: #fff;
  font-size: 44px;
  font-weight: 600;
}
.tick {
  width: 46px;
  height: 46px;
  padding: 7px;
  border-radius: 50%;
  background: #fff;
  color: var(--green);
}

.booking {
  margin-top: 17px;
  display: flex;
  align-items: center;
  gap: 14px;
  height: 63px;
  padding: 0 25px;
  border-radius: 32px;
  background: #e5e5ea;
  color: var(--grey);
  font-size: 36px;
}
.booking b { font-family: "DejaVu Sans Mono", monospace; font-weight: 400; color: #000; }
.booking svg { width: 38px; height: 44px; }

.go {
  flex: none;
  width: 148px;
  height: 148px;
  border-radius: 50%;
  display: grid;
  place-items: center;
  background: var(--teal);
  color: #fff;
}
.go svg { width: 52px; height: 49px; }
```
